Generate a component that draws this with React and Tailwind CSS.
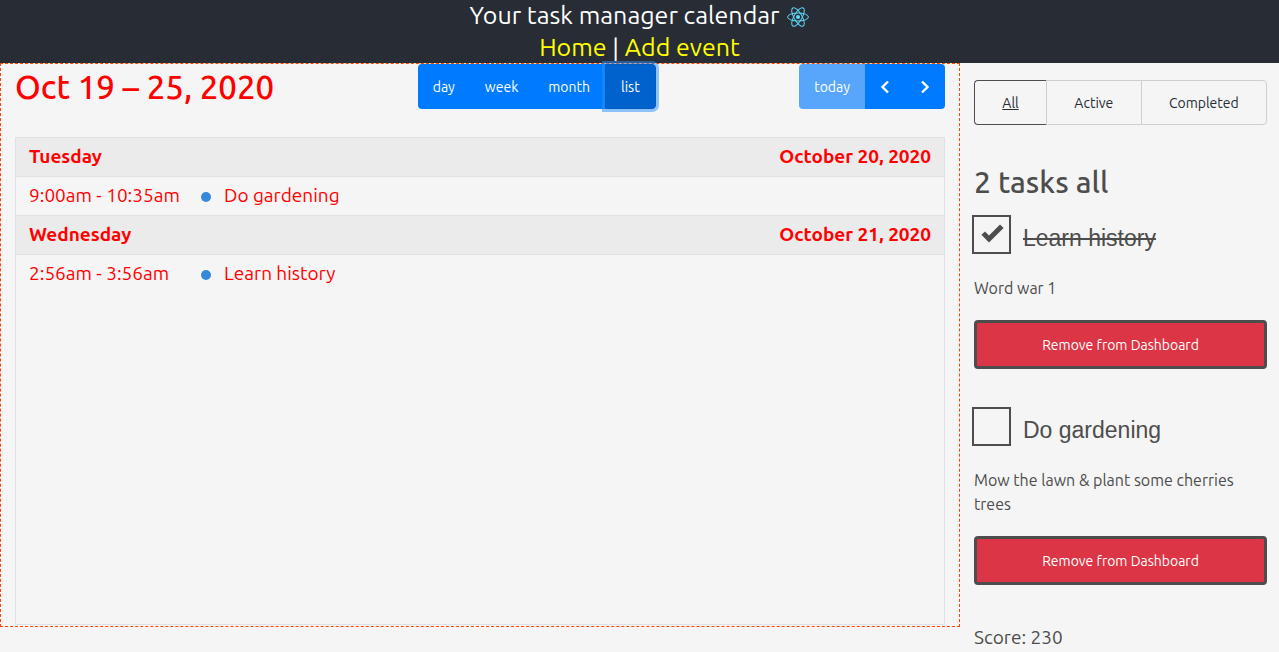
import React, { useState } from "react";

const views = ["day", "week", "month", "list"];

const days = [
  { day: "Tuesday", date: "October 20, 2020", time: "9:00am - 10:35am", title: "Do gardening" },
  { day: "Wednesday", date: "October 21, 2020", time: "2:56am - 3:56am", title: "Learn history" },
];

const initialTasks = [
  { id: "history", name: "Learn history", details: "Word war 1", done: true },
  { id: "garden", name: "Do gardening", details: "Mow the lawn & plant some cherries trees", done: false },
];

function ReactLogo() {
  return (
    <svg viewBox="-12 -12 24 22" className="h-[22px] w-6" fill="none" stroke="#61dafb" strokeWidth="1" aria-hidden="true">
      <circle r="2.1" fill="#61dafb" stroke="none" />
      <ellipse rx="10.4" ry="4" />
      <ellipse rx="10.4" ry="4" transform="rotate(60)" />
      <ellipse rx="10.4" ry="4" transform="rotate(120)" />
    </svg>
  );
}

function Chevron({ points }) {
  return (
    <svg viewBox="0 0 16 16" className="size-4" fill="none" stroke="currentColor" strokeWidth="2.4" aria-hidden="true">
      <polyline points={points} />
    </svg>
  );
}

function Header() {
  return (
    <header className="flex flex-col items-center bg-[#282c34] text-[25px] text-white">
      <h1 className="flex items-center gap-1.5 leading-[31px]">
        Your task manager calendar
        <ReactLogo />
      </h1>
      <nav className="leading-8">
        <a href="#home" className="text-[#ffff00]">Home</a> | <a href="#add" className="text-[#ffff00]">Add event</a>
      </nav>
    </header>
  );
}

function Calendar() {
  const [view, setView] = useState("list");
  return (
    <main className="min-w-0 grow self-start border border-dashed border-[#ff4500] px-3.5 pb-px text-[#ff0000]">
      <div className="mb-7 flex items-start justify-between">
        <h2 className="pt-0.5 text-[33px] leading-[42px] font-medium whitespace-nowrap">Oct 19 – 25, 2020</h2>
        <div className="flex h-[45px] text-sm text-white">
          {views.map((name) => (
            <button
              key={name}
              type="button"
              onClick={() => setView(name)}
              className={
                "px-[15px] first:rounded-l last:rounded-r " +
                (view === name
                  ? "relative border border-[#005cbf] bg-[#0062cc] ring-3 ring-[#268fff]/50"
                  : "bg-[#007bff]")
              }
            >
              {name}
            </button>
          ))}
        </div>
        <div className="flex h-[45px] text-sm text-white">
          <button type="button" disabled className="rounded-l bg-[#58a6fc] px-[15px]">today</button>
          <button type="button" aria-label="previous" className="bg-[#007bff] px-3">
            <Chevron points="11,2.5 5.5,8 11,13.5" />
          </button>
          <button type="button" aria-label="next" className="rounded-r bg-[#007bff] px-3">
            <Chevron points="5,2.5 10.5,8 5,13.5" />
          </button>
        </div>
      </div>
      <div className="aspect-[930/488] border border-[#dee2e6]">
        <table className="w-full text-left text-[19px] leading-9">
          {days.map((d) => (
            <tbody key={d.day}>
              <tr className="border-b border-[#dee2e6] bg-[#ebebeb]">
                <th colSpan={3} className="px-[13px] pt-0 pb-0.5 font-bold">
                  <div className="flex justify-between">
                    <span>{d.day}</span>
                    <span>{d.date}</span>
                  </div>
                </th>
              </tr>
              <tr className="border-b border-[#dee2e6] last:[tbody:last-child_&]:border-b-0">
                <td className="w-[185px] pt-0 pb-0.5 pl-[13px]">{d.time}</td>
                <td className="w-[23px] py-0">
                  <div className="mt-0.5 size-2.5 rounded-full bg-[#3788d8]" />
                </td>
                <td className="pt-0 pb-0.5">{d.title}</td>
              </tr>
            </tbody>
          ))}
        </table>
      </div>
    </main>
  );
}

function Task({ task, onToggle, onRemove }) {
  return (
    <li>
      <div className="relative -ml-0.5 flex h-[39px] gap-3">
        <input
          id={task.id}
          type="checkbox"
          checked={task.done}
          onChange={onToggle}
          className="size-[39px] shrink-0 appearance-none border-2 border-[#4d4d4d]"
        />
        {task.done && (
          <svg viewBox="0 0 24 20" className="pointer-events-none absolute top-[9px] left-2 h-5 w-6 fill-[#4d4d4d]" aria-hidden="true">
            <path d="M1.4 10.8 5 7.4 9 11.5 20 0.5 23.6 4.1 9 18.4Z" />
          </svg>
        )}
        <label
          htmlFor={task.id}
          className={"pt-2 font-['Liberation_Sans',sans-serif] text-[23px] leading-[31px] " + (task.done ? "line-through" : "")}
        >
          {task.name}
        </label>
      </div>
      <p className="mt-[22px] mb-5 text-base leading-6">{task.details}</p>
      <button
        type="button"
        onClick={onRemove}
        className="h-[49px] w-full rounded border-3 border-[#4d4d4d] bg-[#dc3545] text-sm text-white"
      >
        Remove from Dashboard
      </button>
    </li>
  );
}

function Sidebar() {
  const [tasks, setTasks] = useState(initialTasks);
  const [filter, setFilter] = useState("All");
  const shown = tasks.filter((t) => filter === "All" || t.done === (filter === "Completed"));
  return (
    <aside className="w-[319px] shrink-0 pt-[17px] pr-3 pl-3.5 text-[#4d4d4d]">
      <div className="flex h-[45px] text-sm text-[#282c34]">
        {["All", "Active", "Completed"].map((name) => (
          <button
            key={name}
            type="button"
            onClick={() => setFilter(name)}
            className={
              "grow border border-r-0 px-3 first:rounded-l last:rounded-r last:border-r " +
              (filter === name ? "border-[#4d4d4d] underline" : "border-[#cecece]")
            }
          >
            {name}
          </button>
        ))}
      </div>
      <h2 className="mt-[39px] mb-[15px] text-[30px] leading-9 font-medium">{shown.length} tasks {filter.toLowerCase()}</h2>
      <ul className="mb-[38px] flex flex-col gap-[38px]">
        {shown.map((task) => (
          <Task
            key={task.id}
            task={task}
            onToggle={() => setTasks(tasks.map((t) => (t === task ? { ...t, done: !t.done } : t)))}
            onRemove={() => setTasks(tasks.filter((t) => t !== task))}
          />
        ))}
      </ul>
      <p className="text-[19px] leading-[29px]">Score: 230</p>
    </aside>
  );
}

export default function App() {
  return (
    <div className="min-h-screen bg-[#f5f5f5] font-[Ubuntu,'Noto_Sans',sans-serif]">
      <Header />
      <div className="flex">
        <Calendar />
        <Sidebar />
      </div>
    </div>
  );
}
